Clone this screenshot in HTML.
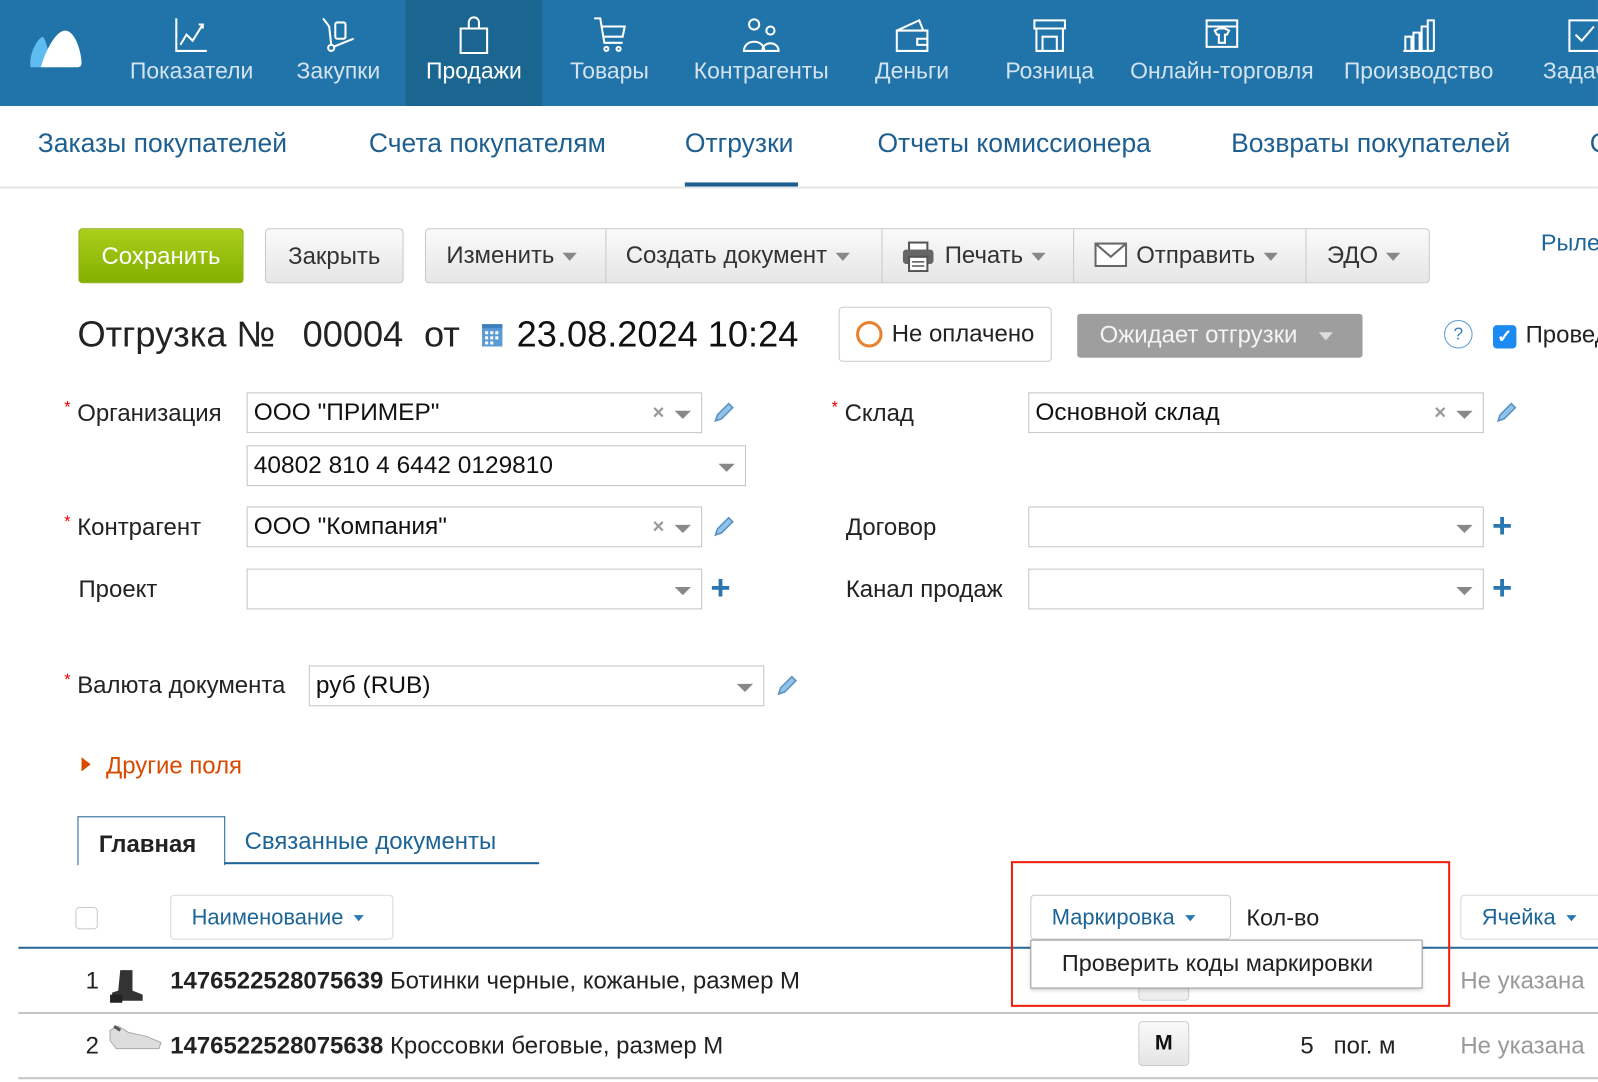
<!DOCTYPE html>
<html><head><meta charset="utf-8"><style>
*{box-sizing:border-box;margin:0;padding:0}
body{width:1598px;height:1082px;overflow:hidden;background:#fff;font-family:"Liberation Sans",Arial,sans-serif;position:relative;color:#222}
#w{position:absolute;left:0;top:0;width:1568px;height:1062px;transform:scale(1.0191);transform-origin:0 0}
.a{position:absolute;white-space:nowrap}
.nav{position:absolute;left:0;top:0;width:1568px;height:104px;background:#2174a9}
.ni{position:absolute;top:0;height:104px;color:#d3e3ef;font-size:22.5px;text-align:center}
.ni span{position:absolute;top:57px;left:-20px;right:-20px}
.ni svg{position:absolute;top:16px;left:50%;margin-left:-19px}
.sub{font-size:26px;color:#1d5f90;top:125px}
.btn{position:absolute;top:224px;height:54px;border:1px solid #c8c8c8;border-radius:4px;background:linear-gradient(#fafafa,#e6e6e6);font-size:23.5px;color:#333;line-height:52px;text-align:center}
.dv{position:absolute;top:225px;width:1px;height:52px;background:#c8c8c8}
.tri{display:inline-block;width:0;height:0;border-left:7px solid transparent;border-right:7px solid transparent;border-top:8px solid #888;vertical-align:middle;margin-left:8px}
.tb{font-size:23.5px;color:#333;top:237px}
.lbl{font-size:23.5px;color:#222}
.st{color:#e00;font-size:16px;vertical-align:top}
.fld{position:absolute;border:1px solid #c4c4c4;height:40px;font-size:24px;line-height:38px;padding-left:6px;color:#111}
.fld .dd{position:absolute;right:10px;top:17px;border-left:8px solid transparent;border-right:8px solid transparent;border-top:8px solid #888}
.fld .x{position:absolute;right:36px;top:0;color:#999;font-size:20px;font-weight:bold}
.plus{font-size:34px;color:#2a76b0;font-weight:bold}
.hb{position:absolute;top:878px;height:44px;border:1px solid #d8d8d8;border-radius:4px;font-size:21.5px;color:#1d6497;line-height:42px;padding-left:20px}
.tr{display:inline-block;border-left:5px solid transparent;border-right:5px solid transparent;border-top:6px solid #2a76b0;vertical-align:middle;margin-left:10px}
.row{font-size:23.5px;color:#222}
</style></head><body><div id="w">
<div class="nav">
<svg class="a" style="left:28px;top:28px" width="54" height="40" viewBox="0 0 54 40"><path d="M2 38 C0 26 8 10 14 8 C18 12 20 26 22 38Z" fill="#5fbcf0"/><path d="M12 38 C16 24 26 2 36 2 C46 2 52 24 52 34 C52 37 50 38 48 38Z" fill="#fff"/></svg>
<div style="position:absolute;left:398px;top:0;width:134px;height:104px;background:#1b6591"></div>
<div class="ni" style="left:118px;width:140px"><svg width="38" height="38" viewBox="0 0 38 38" fill="none" stroke="#fff" stroke-width="2"><path d="M4 2V34H34M8 28L14 18L20 24L30 8M26 8H30V12"/></svg><span>Показатели</span></div>
<div class="ni" style="left:280px;width:104px"><svg width="38" height="38" viewBox="0 0 38 38" fill="none" stroke="#fff" stroke-width="2"><path d="M4 2L10 10L12 28M14 30L34 22"/><circle cx="12" cy="31" r="3"/><rect x="16" y="6" width="10" height="16" rx="2"/></svg><span>Закупки</span></div>
<div class="ni" style="left:398px;width:134px;color:#fff"><svg width="38" height="38" viewBox="0 0 38 38" fill="none" stroke="#fff" stroke-width="2"><path d="M6 12H32V36H6Z M14 12V6A5 5 0 0 1 24 6V12"/></svg><span>Продажи</span></div>
<div class="ni" style="left:548px;width:100px"><svg width="38" height="38" viewBox="0 0 38 38" fill="none" stroke="#fff" stroke-width="2"><path d="M4 2H10L14 26H32M12 10H34L32 20H14"/><circle cx="16" cy="32" r="2"/><circle cx="28" cy="32" r="2"/></svg><span>Товары</span></div>
<div class="ni" style="left:676px;width:142px"><svg width="38" height="38" viewBox="0 0 38 38" fill="none" stroke="#fff" stroke-width="2"><circle cx="12" cy="8" r="5"/><circle cx="28" cy="14" r="4"/><path d="M2 34C2 22 22 22 22 34ZM20 34C20 24 36 24 36 34Z"/></svg><span>Контрагенты</span></div>
<div class="ni" style="left:850px;width:90px"><svg width="38" height="38" viewBox="0 0 38 38" fill="none" stroke="#fff" stroke-width="2"><path d="M4 14H34V34H4ZM4 14L26 4L30 14M24 22H34V28H24Z"/></svg><span>Деньги</span></div>
<div class="ni" style="left:980px;width:100px"><svg width="38" height="38" viewBox="0 0 38 38" fill="none" stroke="#fff" stroke-width="2"><path d="M4 4H34V12H4ZM6 12V34H32V12M12 20H26V34H12Z"/></svg><span>Розница</span></div>
<div class="ni" style="left:1106px;width:186px"><svg width="38" height="38" viewBox="0 0 38 38" fill="none" stroke="#fff" stroke-width="2"><path d="M4 4H34V30H4ZM4 10H34M12 14L16 12H22L26 14L24 18H22V26H16V18H14Z"/></svg><span>Онлайн-торговля</span></div>
<div class="ni" style="left:1316px;width:152px"><svg width="38" height="38" viewBox="0 0 38 38" fill="none" stroke="#fff" stroke-width="2"><path d="M4 34H34M6 34V20H12V34M14 34V16H20V34M22 34V10H28V34M28 34V4H34V34"/></svg><span>Производство</span></div>
<div class="ni" style="left:1506px;width:110px;text-align:left"><svg width="38" height="38" viewBox="0 0 38 38" fill="none" stroke="#fff" stroke-width="2" style="left:30px;margin-left:0"><path d="M4 4H34V34H4ZM10 18L16 24L28 10"/></svg><span style="left:8px">Задачи</span></div>
</div>
<div class="a sub" style="left:37px">Заказы покупателей</div>
<div class="a sub" style="left:362px">Счета покупателям</div>
<div class="a sub" style="left:672px">Отгрузки</div>
<div class="a sub" style="left:861px">Отчеты комиссионера</div>
<div class="a sub" style="left:1208px">Возвраты покупателей</div>
<div class="a sub" style="left:1560px">С</div>
<div class="a" style="left:672px;top:179px;width:111px;height:5px;background:#1d5f90"></div>
<div class="a" style="left:0;top:183px;width:1568px;height:2px;background:#e6e6e6"></div>

<div class="btn" style="left:77px;width:162px;background:linear-gradient(#a9cf1a,#84b000);border-color:#8aae10;color:#fff">Сохранить</div>
<div class="btn" style="left:260px;width:136px">Закрыть</div>
<div class="btn" style="left:417px;width:986px"></div>
<div class="a tb" style="left:438px">Изменить<span class="tri"></span></div>
<div class="dv" style="left:594px"></div>
<div class="a tb" style="left:614px">Создать документ<span class="tri"></span></div>
<div class="dv" style="left:865px"></div>
<svg class="a" style="left:885px;top:237px" width="32" height="30" viewBox="0 0 32 30"><rect x="7" y="1" width="18" height="8" fill="#fff" stroke="#555" stroke-width="2"/><rect x="1" y="8" width="30" height="14" rx="3" fill="#666"/><rect x="7" y="15" width="18" height="14" fill="#fff" stroke="#555" stroke-width="2"/><path d="M10 20H22M10 24H22" stroke="#555" stroke-width="1.5"/></svg>
<div class="a tb" style="left:927px">Печать<span class="tri"></span></div>
<div class="dv" style="left:1053px"></div>
<svg class="a" style="left:1074px;top:238px" width="32" height="24" viewBox="0 0 32 24"><rect x="1" y="1" width="30" height="22" fill="#fff" stroke="#666" stroke-width="2"/><path d="M1 1L16 14L31 1" fill="none" stroke="#666" stroke-width="2"/></svg>
<div class="a tb" style="left:1115px">Отправить<span class="tri"></span></div>
<div class="dv" style="left:1281px"></div>
<div class="a tb" style="left:1302px">ЭДО<span class="tri"></span></div>
<div class="a" style="left:1512px;top:225px;font-size:23px;color:#1d6497">Рыле</div>

<div class="a" style="left:76px;top:308px;font-size:35.5px;color:#222">Отгрузка №</div>
<div class="a" style="left:297px;top:308px;font-size:35.5px;color:#222">00004</div>
<div class="a" style="left:416px;top:308px;font-size:35.5px;color:#222">от</div>
<svg class="a" style="left:472px;top:317px" width="22" height="24" viewBox="0 0 22 24"><rect x="1" y="4" width="20" height="19" fill="#5b9bd5"/><rect x="1" y="1" width="20" height="4" fill="#3f7fc0"/><g fill="#fff"><rect x="4" y="8" width="3" height="3"/><rect x="9" y="8" width="3" height="3"/><rect x="14" y="8" width="3" height="3"/><rect x="4" y="13" width="3" height="3"/><rect x="9" y="13" width="3" height="3"/><rect x="14" y="13" width="3" height="3"/><rect x="4" y="18" width="3" height="3"/><rect x="9" y="18" width="3" height="3"/></g></svg>
<div class="a" style="left:507px;top:308px;font-size:35.5px;color:#111">23.08.2024 10:24</div>
<div class="a" style="left:823px;top:301px;width:209px;height:54px;border:1px solid #ccc;border-radius:4px"></div>
<div class="a" style="left:840px;top:315px;width:26px;height:26px;border:3px solid #e8822f;border-radius:50%"></div>
<div class="a" style="left:875px;top:314px;font-size:23.5px;color:#222">Не оплачено</div>
<div class="a" style="left:1057px;top:308px;width:280px;height:43px;background:#9e9e9e;border-radius:3px;color:#f4f4f4;font-size:23.5px;line-height:41px;padding-left:22px">Ожидает отгрузки <span class="tri" style="border-top-color:#ddd;margin-left:14px"></span></div>
<div class="a" style="left:1417px;top:314px;width:28px;height:28px;border:1.5px solid #5b9bd5;border-radius:50%;color:#3f7fc0;font-size:17px;text-align:center;line-height:25px">?</div>
<div class="a" style="left:1465px;top:319px;width:23px;height:23px;background:#1c8af0;border-radius:4px;color:#fff;font-size:18px;text-align:center;line-height:23px;font-weight:bold">✓</div>
<div class="a" style="left:1497px;top:315px;font-size:23.5px;color:#222">Провед</div>

<div class="a lbl" style="left:63px;top:392px"><span class="st">*</span> Организация</div>
<div class="fld" style="left:242px;top:385px;width:447px">ООО "ПРИМЕР"<span class="x">×</span><span class="dd"></span></div>
<svg class="a" style="left:698px;top:393px" width="24" height="24" viewBox="0 0 24 24"><path d="M4 20L6 14L17 3L21 7L10 18Z" fill="#8ec3ea" stroke="#5a8fc0" stroke-width="1.5"/></svg>
<div class="fld" style="left:242px;top:437px;width:490px">40802 810 4 6442 0129810<span class="dd"></span></div>
<div class="a lbl" style="left:63px;top:504px"><span class="st">*</span> Контрагент</div>
<div class="fld" style="left:242px;top:497px;width:447px">ООО "Компания"<span class="x">×</span><span class="dd"></span></div>
<svg class="a" style="left:698px;top:505px" width="24" height="24" viewBox="0 0 24 24"><path d="M4 20L6 14L17 3L21 7L10 18Z" fill="#8ec3ea" stroke="#5a8fc0" stroke-width="1.5"/></svg>
<div class="a lbl" style="left:77px;top:565px">Проект</div>
<div class="fld" style="left:242px;top:558px;width:447px"><span class="dd"></span></div>
<div class="a plus" style="left:697px;top:558px">+</div>

<div class="a lbl" style="left:816px;top:392px"><span class="st">*</span> Склад</div>
<div class="fld" style="left:1009px;top:385px;width:447px">Основной склад<span class="x">×</span><span class="dd"></span></div>
<svg class="a" style="left:1466px;top:393px" width="24" height="24" viewBox="0 0 24 24"><path d="M4 20L6 14L17 3L21 7L10 18Z" fill="#8ec3ea" stroke="#5a8fc0" stroke-width="1.5"/></svg>
<div class="a lbl" style="left:830px;top:504px">Договор</div>
<div class="fld" style="left:1009px;top:497px;width:447px"><span class="dd"></span></div>
<div class="a plus" style="left:1464px;top:497px">+</div>
<div class="a lbl" style="left:830px;top:565px">Канал продаж</div>
<div class="fld" style="left:1009px;top:558px;width:447px"><span class="dd"></span></div>
<div class="a plus" style="left:1464px;top:558px">+</div>

<div class="a lbl" style="left:63px;top:659px"><span class="st">*</span> Валюта документа</div>
<div class="fld" style="left:303px;top:653px;width:447px">руб (RUB)<span class="dd"></span></div>
<svg class="a" style="left:760px;top:661px" width="24" height="24" viewBox="0 0 24 24"><path d="M4 20L6 14L17 3L21 7L10 18Z" fill="#8ec3ea" stroke="#5a8fc0" stroke-width="1.5"/></svg>

<div class="a" style="left:80px;top:743px;border-top:7px solid transparent;border-bottom:7px solid transparent;border-left:9px solid #d84a00"></div>
<div class="a" style="left:104px;top:738px;font-size:23.5px;color:#d84a00">Другие поля</div>

<div class="a" style="left:76px;top:801px;width:145px;height:48px;border:1.5px solid #1d6497;border-bottom:none;background:#fff"></div>
<div class="a" style="left:97px;top:815px;font-size:23.5px;font-weight:bold;color:#222">Главная</div>
<div class="a" style="left:220px;top:846px;width:309px;height:2px;background:#1d6497"></div>
<div class="a" style="left:240px;top:812px;font-size:23.5px;color:#1d6497">Связанные документы</div>

<div class="a" style="left:74px;top:890px;width:22px;height:22px;border:1px solid #c8c8c8;border-radius:4px"></div>
<div class="hb" style="left:167px;width:219px">Наименование<span class="tr"></span></div>
<div class="hb" style="left:1011px;width:197px;border-color:#c8c8c8">Маркировка<span class="tr"></span></div>
<div class="a" style="left:1223px;top:887px;font-size:23px;color:#222">Кол-во</div>
<div class="hb" style="left:1433px;width:180px">Ячейка<span class="tr"></span></div>
<div class="a" style="left:18px;top:929px;width:1560px;height:2px;background:#2a6a98"></div>

<div class="a row" style="left:84px;top:949px">1</div>
<svg class="a" style="left:104px;top:948px" width="40" height="38" viewBox="0 0 40 38"><path d="M14 4H26V24L36 28V34H6V26L12 24Z" fill="#333"/><path d="M4 28H16V36H4Z" fill="#222"/></svg>
<div class="a row" style="left:167px;top:949px"><b>1476522528075639</b> Ботинки черные, кожаные, размер М</div>
<div class="a" style="left:1117px;top:960px;width:50px;height:22px;border:1px solid #ccc;border-radius:4px;background:#eee"></div>
<div class="a" style="left:1433px;top:949px;font-size:23.5px;color:#999">Не указана</div>
<div class="a" style="left:18px;top:993px;width:1560px;height:2px;background:#c4c4c4"></div>

<div class="a row" style="left:84px;top:1013px">2</div>
<svg class="a" style="left:104px;top:1003px" width="56" height="30" viewBox="0 0 56 30"><path d="M4 8L12 4L22 10L40 14L54 20L52 26H10L4 18Z" fill="#ddd" stroke="#aaa"/><path d="M8 4L14 8" stroke="#555" stroke-width="3"/></svg>
<div class="a row" style="left:167px;top:1013px"><b>1476522528075638</b> Кроссовки беговые, размер М</div>
<div class="a" style="left:1117px;top:1002px;width:50px;height:44px;border:1px solid #ccc;border-radius:4px;background:linear-gradient(#fafafa,#e4e4e4);text-align:center;line-height:42px;font-size:21px;font-weight:bold;color:#111">М</div>
<div class="a row" style="left:1276px;top:1013px">5&nbsp;&nbsp; пог. м</div>
<div class="a" style="left:1433px;top:1013px;font-size:23.5px;color:#999">Не указана</div>
<div class="a" style="left:18px;top:1057px;width:1560px;height:2px;background:#c4c4c4"></div>

<div class="a" style="left:1011px;top:922px;width:385px;height:48px;border:1.5px solid #999;background:#fff;box-shadow:0 2px 4px rgba(0,0,0,.2);font-size:23px;color:#222;line-height:45px;padding-left:30px">Проверить коды маркировки</div>
<div class="a" style="left:992px;top:845px;width:431px;height:143px;border:2px solid #f0200a"></div>
</div></body></html>
